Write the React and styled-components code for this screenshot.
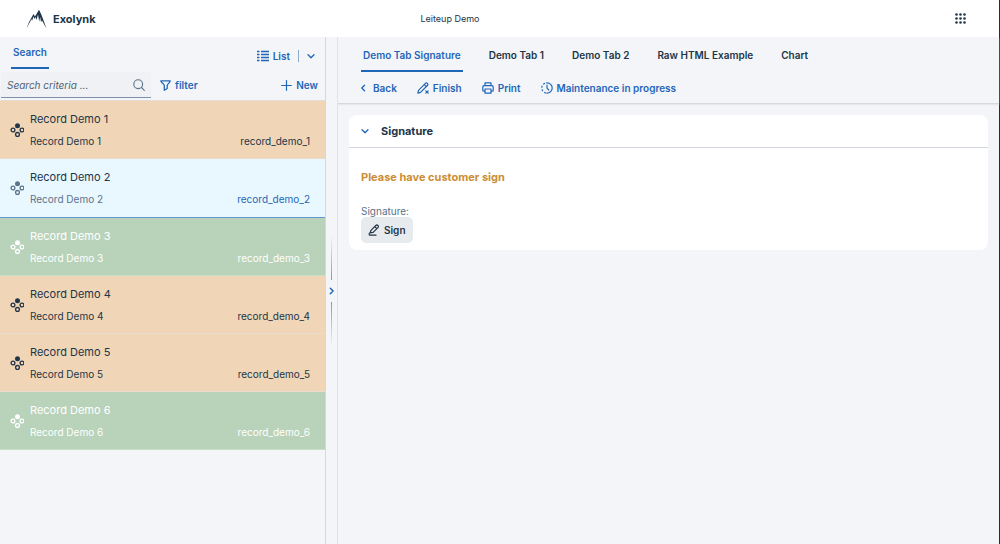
import React, { useState } from "react";
import styled, { createGlobalStyle, css } from "styled-components";

const c = {
  blue: "#1f66b8",
  ink: "#223548",
  muted: "#5b738b",
  page: "#f4f5f8",
  line: "#d5d9df",
};

const Global = createGlobalStyle`
  * { box-sizing: border-box; }
  body {
    margin: 0;
    background: ${c.page};
    color: ${c.ink};
    font: 10px/16px Inter, "Liberation Sans", sans-serif;
  }
  button, input { font: inherit; color: inherit; }
`;

const Page = styled.div`
  display: flex;
  flex-direction: column;
  min-height: 100vh;
  border-right: 1px solid #2b2b2e;
`;

const Header = styled.header`
  display: grid;
  grid-template-columns: 1fr auto 1fr;
  align-items: center;
  height: 37px;
  padding: 0 33px 0 26px;
  background: #fff;
`;

const Brand = styled.a`
  display: flex;
  align-items: center;
  gap: 6px;
  color: ${c.ink};
  font-size: 11px;
  font-weight: 700;
  text-decoration: none;
`;

const AppTitle = styled.span`
  margin-right: 92px;
  font-size: 9px;
`;

const IconButton = styled.button`
  display: flex;
  justify-self: end;
  padding: 0;
  border: 0;
  background: none;
`;

const Body = styled.div`
  display: flex;
  flex: 1;
`;

const Sidebar = styled.aside`
  flex: 0 1 326px;
  border-right: 1px solid ${c.line};
`;

const SideTop = styled.div`
  display: flex;
  justify-content: space-between;
  align-items: center;
  height: 35px;
  padding: 2px 10px 0 11px;
`;

const Tab = styled.button`
  height: 35px;
  padding: 2px 2px 0;
  border: 0;
  border-bottom: 2px solid ${(p) => (p.$active ? c.blue : "transparent")};
  background: none;
  color: ${(p) => (p.$active ? c.blue : c.ink)};
  font-weight: 600;
  white-space: nowrap;
`;

const SearchTab = styled(Tab)`
  height: 32px;
  margin-bottom: 5px;
  padding-top: 0;
`;

const Action = styled.button`
  display: flex;
  align-items: center;
  gap: 4px;
  padding: 0;
  border: 0;
  background: none;
  color: ${c.blue};
  font-weight: 600;
  white-space: nowrap;
`;

const ViewSwitch = styled.div`
  display: flex;
  align-items: center;
  gap: 8px;
`;

const Divider = styled.span`
  width: 1px;
  height: 12px;
  background: #8fa9c8;
`;

const SearchRow = styled.div`
  display: flex;
  align-items: center;
  gap: 9px;
  height: 28px;
  padding: 0 7px 2px 1px;
  ${Action}:last-child { margin-left: auto; }
`;

const SearchBox = styled.label`
  display: flex;
  align-items: center;
  width: 150px;
  height: 26px;
  padding: 0 6px;
  border-bottom: 1px solid #7d90a5;
  border-radius: 3px 3px 0 0;
  background: #eff1f4;
  color: ${c.muted};
`;

const SearchInput = styled.input`
  flex: 1;
  min-width: 0;
  padding: 0;
  border: 0;
  outline: 0;
  background: none;
  &::placeholder { color: #4f6275; font-style: italic; opacity: 1; }
`;

const List = styled.ul`
  margin: 0;
  padding: 0;
  border-top: 1px solid #e5dcd5;
  list-style: none;
`;

const tones = {
  orange: css`background: #f0d5b7; color: ${c.ink};`,
  green: css`background: #b9d3ba; border-bottom-color: #c9dcc6; color: #fff;`,
  selected: css`
    height: 59px;
    background: #e9f7fe;
    color: ${c.muted};
    border-bottom-color: #6499d0;
  `,
};

const Record = styled.button`
  display: flex;
  align-items: center;
  gap: 6px;
  width: 100%;
  height: 58px;
  padding: 0 15px 0 10px;
  border: 0;
  border-bottom: 1px solid #e9dccd;
  text-align: left;
  ${(p) => tones[p.$tone]}
`;

const RecordText = styled.span`
  display: grid;
  grid-template-columns: 1fr auto;
  flex: 1;
  row-gap: 6px;
`;

const RecordName = styled.span`
  grid-column: 1 / -1;
  font-size: 11px;
  ${(p) => p.$tone === "selected" && css`color: ${c.ink};`}
`;

const RecordId = styled.span`
  ${(p) => p.$tone === "selected" && css`color: ${c.blue};`}
`;

const Splitter = styled.div`
  display: flex;
  flex-direction: column;
  align-items: center;
  justify-content: center;
  gap: 7px;
  width: 11px;
`;

const Grip = styled.span`
  width: 1px;
  height: 45px;
  background: linear-gradient(${(p) => (p.$up ? "to top" : "to bottom")}, #6d9fce, #6d9fce00);
`;

const SplitButton = styled(IconButton)`
  color: ${c.blue};
`;

const Main = styled.main`
  flex: 1;
  min-width: 0;
  border-left: 1px solid #dfe2e7;
`;

const MainBar = styled.div`
  padding: 0 23px;
  border-bottom: 1px solid #d6d9de;
  box-shadow: 0 1px 1px #e6e8ec;
`;

const Tabs = styled.nav`
  display: flex;
  gap: 24px;
`;

const Toolbar = styled.div`
  display: flex;
  align-items: center;
  gap: 20px;
  height: 31px;
`;

const Card = styled.section`
  margin: 11px;
  border-radius: 8px;
  background: #fff;
`;

const CardHead = styled.button`
  display: flex;
  align-items: center;
  gap: 12px;
  width: 100%;
  height: 33px;
  padding: 0 12px;
  border: 0;
  border-bottom: 1px solid #d3d6de;
  background: none;
  color: ${c.blue};
`;

const CardTitle = styled.span`
  color: ${c.ink};
  font-size: 11px;
  font-weight: 700;
`;

const CardBody = styled.div`
  padding: 21px 12px 7px;
`;

const Notice = styled.p`
  margin: 0 0 20px;
  color: #cc8d34;
  font-size: 11px;
  font-weight: 700;
`;

const FieldLabel = styled.label`
  display: block;
  color: ${c.muted};
  line-height: 12px;
`;

const SignButton = styled.button`
  display: flex;
  align-items: center;
  gap: 4px;
  height: 26px;
  padding: 0 7px;
  border: 0;
  border-radius: 5px;
  background: #e8ebee;
  font-weight: 600;
`;

const Svg = ({ w = 12, h = w, children, sw = 1.3 }) => (
  <svg width={w} height={h} viewBox={`0 0 ${w} ${h}`} fill="none" stroke="currentColor"
    strokeWidth={sw} strokeLinecap="round" strokeLinejoin="round" aria-hidden="true">
    {children}
  </svg>
);

const Logo = () => (
  <Svg w={21} h={20} sw={1}>
    <path d="M.5 19.500 3 13 7.500 5 9 7.500 13 .8 15.500 6 17 10 20.500 19.500 16 11.500 15 13 14.200 8 13.200 12.500 12 5.500 10.500 11 9.500 8 8.500 10 7.500 7.500 6 12 5.500 10Z"
      fill="currentColor" stroke="none" />
  </Svg>
);

const Dots = () => (
  <Svg w={11}>
    {[1.5, 5.5, 9.5].map((y) => [1.5, 5.5, 9.5].map((x) => (
      <circle key={`${x}-${y}`} cx={x} cy={y} r="1.300" fill="currentColor" stroke="none" />
    )))}
  </Svg>
);

const Cluster = () => (
  <Svg w={14} sw={1.3}>
    <circle cx="7.500" cy="2.700" r="2.500" fill="currentColor" stroke="none" />
    <circle cx="3" cy="7" r="1.900" />
    <circle cx="12" cy="7" r="1.900" />
    <circle cx="7.500" cy="11.400" r="1.900" />
  </Svg>
);

const ListIcon = () => (
  <Svg w={12} sw={1.4}>
    <path d="M4 1.500h8M4 4.500h8M4 7.500h8M4 10.500h8M0 1.500h2.500M0 4.500h2.500M0 7.500h2.500M0 10.500h2.500" strokeLinecap="butt" />
  </Svg>
);

const Down = () => <Svg w={8}><path d="M1 2.700 4 5.700 7 2.700" /></Svg>;
const Left = () => <Svg w={8}><path d="M3.500 1.200.8 4l2.700 2.800" /></Svg>;
const Right = () => <Svg w={8} sw={1.5}><path d="M2.300 1.200 5.100 4 2.300 6.800" /></Svg>;
const Plus = () => <Svg w={11} sw={1.2}><path d="M5.500.7v9.600M.7 5.500h9.600" /></Svg>;
const Magnifier = () => (
  <Svg w={12} sw={1.1}><circle cx="5.200" cy="5.200" r="4.400" /><path d="m8.500 8.500 2.800 2.800" /></Svg>
);
const Funnel = () => (
  <Svg w={11}><path d="M.8.8h9.400c0 2-3 3-3 4.700v3L4.300 10.300V5.500C4.300 3.800.8 2.800.8.8Z" /></Svg>
);
const PenCross = () => (
  <Svg w={12} sw={1.2}>
    <path d="M.8 11.200 1.500 8.300 8.400 1.400Q9.300.5 10.300 1.500T10.400 3.500L3.500 10.400ZM7.300 2.700l2 2M8.800 8.800l2.400 2.400M11.200 8.800 8.800 11.200" />
  </Svg>
);
const Printer = () => (
  <Svg w={12} sw={1.2}>
    <path d="M3 3.700V.9h6v2.800M3 9.200H1.800Q.8 9.200.8 8.200V4.900q0-1.200 1.200-1.200h8q1.200 0 1.200 1.200v3.300q0 1-1 1H9M3 7h6v4.200H3Z" />
  </Svg>
);
const Clock = () => (
  <Svg w={12} sw={1.2}>
    <path d="M6 .8a5.200 5.200 0 0 1 0 10.400M6 3v3.200L7.800 8" />
    <path d="M6 11.200A5.200 5.200 0 0 1 6 .8" strokeDasharray="2 1.600" strokeDashoffset="-1" strokeLinecap="butt" />
  </Svg>
);
const Pen = () => (
  <Svg w={12} sw={1.2}>
    <path d="M2.300 8.500 3 6.300 7.800 1.500Q8.800.5 9.900 1.500T9.900 3.600L5.100 8.400ZM6.800 2.600l2 2M5 8.500 1.500 9Q.5 11.200 2.500 11.200H8" />
  </Svg>
);

const records = ["orange", "selected", "green", "orange", "orange", "green"];
const tabs = ["Demo Tab Signature", "Demo Tab 1", "Demo Tab 2", "Raw HTML Example", "Chart"];

export default function App() {
  const [query, setQuery] = useState("");
  return (
    <Page>
      <Global />
      <Header>
        <Brand href="#"><Logo />Exolynk</Brand>
        <AppTitle>Leiteup Demo</AppTitle>
        <IconButton aria-label="Apps"><Dots /></IconButton>
      </Header>
      <Body>
        <Sidebar>
          <SideTop>
            <SearchTab $active>Search</SearchTab>
            <ViewSwitch>
              <Action><ListIcon />List</Action>
              <Divider />
              <Action aria-label="Choose view"><Down /></Action>
            </ViewSwitch>
          </SideTop>
          <SearchRow>
            <SearchBox>
              <SearchInput aria-label="Search criteria" placeholder="Search criteria ..."
                value={query} onChange={(e) => setQuery(e.target.value)} />
              <Magnifier />
            </SearchBox>
            <Action><Funnel />filter</Action>
            <Action><Plus />New</Action>
          </SearchRow>
          <List>
            {records.map((tone, i) => (
              <li key={i}>
                <Record $tone={tone}>
                  <Cluster />
                  <RecordText>
                    <RecordName $tone={tone}>Record Demo {i + 1}</RecordName>
                    <span>Record Demo {i + 1}</span>
                    <RecordId $tone={tone}>record_demo_{i + 1}</RecordId>
                  </RecordText>
                </Record>
              </li>
            ))}
          </List>
        </Sidebar>
        <Splitter>
          <Grip $up />
          <SplitButton aria-label="Resize panels"><Right /></SplitButton>
          <Grip />
        </Splitter>
        <Main>
          <MainBar>
            <Tabs>
              {tabs.map((t, i) => <Tab key={t} $active={i === 0}>{t}</Tab>)}
            </Tabs>
            <Toolbar>
              <Action><Left />Back</Action>
              <Action><PenCross />Finish</Action>
              <Action><Printer />Print</Action>
              <Action><Clock />Maintenance in progress</Action>
            </Toolbar>
          </MainBar>
          <Card>
            <CardHead><Down /><CardTitle>Signature</CardTitle></CardHead>
            <CardBody>
              <Notice>Please have customer sign</Notice>
              <FieldLabel htmlFor="sign">Signature:</FieldLabel>
              <SignButton id="sign"><Pen />Sign</SignButton>
            </CardBody>
          </Card>
        </Main>
      </Body>
    </Page>
  );
}
